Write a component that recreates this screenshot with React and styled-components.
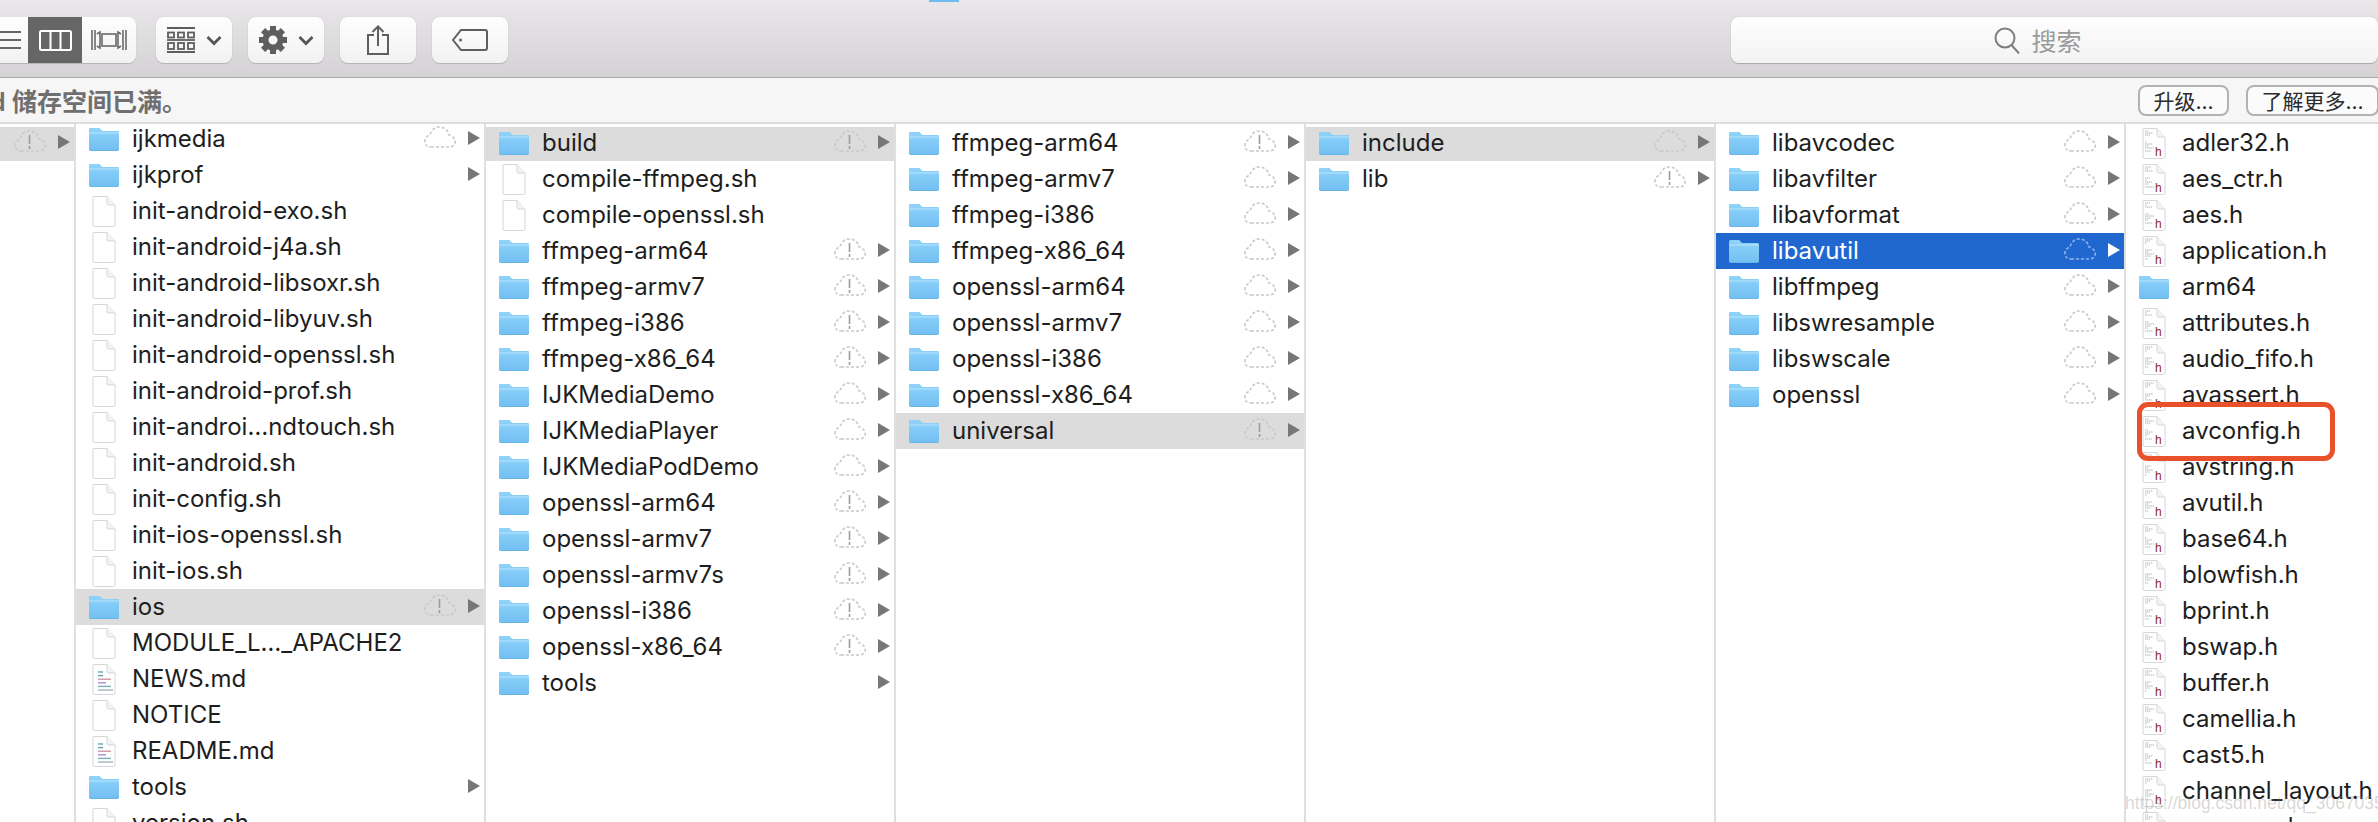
import React from 'react';
import styled, { createGlobalStyle } from 'styled-components';

const FONT = `Inter, "Noto Sans CJK SC", sans-serif`;

const Global = createGlobalStyle`
  html, body {
    margin: 0;
    background: #fff;
    overflow: hidden;
  }
`;

const Folder = () => (
  <svg width="30" height="24" viewBox="0 0 30 24">
    <defs>
      <linearGradient id="folderBody" x1="0" y1="0" x2="0" y2="1">
        <stop offset="0" stopColor="#8fd3fa" />
        <stop offset="1" stopColor="#72bff2" />
      </linearGradient>
    </defs>
    <path d="M0 3a2 2 0 0 1 2-2h8l3 3h15a2 2 0 0 1 2 2v16a2 2 0 0 1-2 2H2a2 2 0 0 1-2-2Z" fill="#5ea9dd" />
    <path d="M0 3a2 2 0 0 1 2-2h8l3 3h15a2 2 0 0 1 2 2v15.500a2 2 0 0 1-2 2H2a2 2 0 0 1-2-2Z" fill="url(#folderBody)" />
    <path d="M0 6h30" stroke="#b9e4fc" strokeWidth="1" />
  </svg>
);

const Paper = () => (
  <>
    <path d="M1 1.500a1 1 0 0 1 1-1h13l8 8.500v20a1.500 1.500 0 0 1-1.500 1.500h-19a1.500 1.500 0 0 1-1.500-1.500Z" fill="#fff" stroke="#d6d6d6" />
    <path d="M15 .5v7a1.500 1.500 0 0 0 1.500 1.500H23" fill="#f4f4f4" stroke="#d6d6d6" />
  </>
);

const MD_LINES = [
  ['#5d9fb8', 6, 11],
  ['#5d9fb8', 6, 11],
  ['#c79aa8', 6, 19],
  ['#a48fd0', 6, 14],
  ['#7fb0b8', 6, 19],
  ['#a3b4b8', 6, 21],
];

const Doc = ({ kind, seed = 0 }) => (
  <svg width="24" height="31" viewBox="0 0 24 31">
    <Paper />
    {kind === 'md' && MD_LINES.map(([c, x, e], i) => (
      <path key={i} d={`M${x} ${8 + i * 3.6}H${e}`} stroke={c} strokeWidth="1.400" />
    ))}
    {kind === 'h' && [3, 5, 7, 14, 16, 18, 20, 23].map((y, i) => (
      <path key={y} d={`M3 ${y}H${5 + ((seed + i * 5) % 8)}`} stroke="#b5b5b5" strokeWidth="1" strokeDasharray="1.500 .5" />
    ))}
    {kind === 'h' && <text x="13" y="28" fontSize="12" fontFamily="Liberation Sans" fill="#8c2b2b">h</text>}
  </svg>
);

const Cloud = ({ warn, light }) => (
  <svg width="32" height="22" viewBox="0 0 32 22" fill="none">
    <path
      d="M7 21H25C30 21 32 17 31 14C30 11 27 9 25 9C24 4 20 1 15 1C10 1 7 5 6 9C3 10 1 12 1 15C1 19 3 21 7 21Z"
      stroke={light ? '#8fb4ea' : '#c9c9c9'}
      strokeWidth="1.600"
      strokeDasharray="3 2"
    />
    {warn && <path d="M15.500 5V14M15.500 16V19" stroke="#9c9c9c" strokeWidth="1.600" />}
  </svg>
);

const Window = styled.div`
  position: relative;
  width: 2378px;
  height: 822px;
  overflow: hidden;
  display: flex;
  flex-direction: column;
  font-family: ${FONT};
  background: #fff;
`;

const Toolbar = styled.div`
  position: relative;
  flex: none;
  height: 78px;
  box-sizing: border-box;
  padding-top: 17px;
  display: flex;
  align-items: flex-start;
  gap: 16px;
  background: linear-gradient(#e9e7e9, #d4d2d4);
  border-bottom: 1px solid #a9a9a9;
  overflow: hidden;
`;

const TitleFolder = styled.div`
  position: absolute;
  top: 0;
  left: 929px;
  width: 30px;
  height: 2px;
  background: #6fbdf0;
`;

const Segments = styled.div`
  flex: none;
  display: flex;
  height: 46px;
  margin-left: -26px;
  margin-right: 4px;
  border-radius: 8px;
  overflow: hidden;
  background: linear-gradient(#fefefe, #f2f2f2);
  box-shadow: 0 1px 1px #b4b2b4;
`;

const Segment = styled.div`
  width: ${p => p.$w}px;
  display: flex;
  align-items: center;
  justify-content: center;
  background: ${p => (p.$active ? '#666666' : 'transparent')};
`;

const ToolButton = styled.div`
  flex: none;
  width: 76px;
  height: 46px;
  box-sizing: border-box;
  display: flex;
  align-items: center;
  justify-content: center;
  gap: 11px;
  border-radius: 8px;
  background: linear-gradient(#fefefe, #f2f2f2);
  box-shadow: 0 0 1px #b4b2b4, 0 1px 1px #b4b2b4;
`;

const Search = styled.div`
  flex: none;
  width: 647px;
  height: 46px;
  margin-left: 1207px;
  box-sizing: border-box;
  display: flex;
  align-items: center;
  justify-content: center;
  gap: 11px;
  padding-right: 33px;
  border-radius: 8px;
  background: linear-gradient(#fefefe, #f3f3f3);
  box-shadow: 0 0 1px #a8a8a8, 0 1px 1px #a8a8a8;
  color: #9b9b9b;
  font-size: 25px;
`;

const Notice = styled.div`
  flex: none;
  height: 46px;
  box-sizing: border-box;
  display: flex;
  align-items: center;
  justify-content: space-between;
  background: #f6f6f6;
  border-bottom: 2px solid #dcdcdc;
  overflow: hidden;
`;

const NoticeText = styled.div`
  margin-left: -72px;
  font-size: 25px;
  font-weight: 600;
  color: #6f6f6f;
  white-space: nowrap;
`;

const NoticeActions = styled.div`
  display: flex;
  gap: 17px;
  margin-right: -1px;
`;

const NoticeButton = styled.div`
  width: ${p => p.$w}px;
  height: 31px;
  box-sizing: border-box;
  display: flex;
  align-items: center;
  justify-content: center;
  border: 2px solid #b2b2b2;
  border-radius: 8px;
  font-size: 21px;
  color: #2b2b2b;
  background: #fbfbfb;
`;

const Browser = styled.div`
  flex: 1;
  min-height: 0;
  display: flex;
`;

const Column = styled.div`
  flex: none;
  width: ${p => p.$w}px;
  box-sizing: border-box;
  border-right: ${p => (p.$last ? 'none' : '2px solid #dfdfdf')};
  overflow: hidden;
`;

const List = styled.div`
  margin-top: ${p => p.$offset || 0}px;
  padding-top: 1px;
`;

const Row = styled.div`
  height: 36px;
  box-sizing: border-box;
  display: flex;
  align-items: center;
  padding-left: ${p => (p.$bare ? 0 : 13)}px;
  background: ${p => (p.$state === 'selected' ? '#2068d0' : p.$state === 'open' ? '#dcdcdc' : 'transparent')};
  color: ${p => (p.$state === 'selected' ? '#fff' : '#1e1e1e')};
  ${p => p.$clip && `
    height: 34px;
    margin-top: 2px;
    padding-bottom: 2px;
  `}
`;

const IconSlot = styled.div`
  flex: none;
  width: 30px;
  height: 31px;
  display: flex;
  align-items: center;
  justify-content: center;
`;

const Name = styled.div`
  flex: 1;
  min-width: 0;
  margin-left: ${p => (p.$bare ? 0 : 13)}px;
  font-size: 24px;
  line-height: 36px;
  white-space: nowrap;
`;

const CloudSlot = styled.div`
  flex: none;
  width: 32px;
  height: 22px;
  margin: -4px 12px 0 0;
`;

const Arrow = styled.div`
  flex: none;
  width: 0;
  height: 0;
  margin: -2px 4px 0 0;
  border-left: 12px solid ${p => (p.$light ? '#fff' : '#777')};
  border-top: 7px solid transparent;
  border-bottom: 7px solid transparent;
`;

const Mark = styled.div`
  position: absolute;
  left: 2137px;
  top: 402px;
  width: 198px;
  height: 59px;
  box-sizing: border-box;
  border: 5px solid #e8512a;
  border-radius: 11px;
`;

const Watermark = styled.div`
  position: absolute;
  left: 2125px;
  top: 793px;
  font-family: "Liberation Sans", sans-serif;
  font-size: 17.500px;
  color: rgba(140, 140, 140, .35);
  white-space: nowrap;
`;

// kinds: d = folder, f = plain file, m = markdown, h = header
const folder = (name, status, state) => ({ name, kind: 'd', status, state });
const file = (name, kind = 'f') => ({ name, kind });

const COLUMNS = [
  { w: 76, rows: [{ name: '', kind: null, status: 'warn', state: 'open', arrow: true }] },
  {
    w: 410,
    offset: -4,
    rows: [
      folder('ijkmedia', 'cloud'),
      folder('ijkprof'),
      file('init-android-exo.sh'),
      file('init-android-j4a.sh'),
      file('init-android-libsoxr.sh'),
      file('init-android-libyuv.sh'),
      file('init-android-openssl.sh'),
      file('init-android-prof.sh'),
      file('init-androi…ndtouch.sh'),
      file('init-android.sh'),
      file('init-config.sh'),
      file('init-ios-openssl.sh'),
      file('init-ios.sh'),
      folder('ios', 'warn', 'open'),
      file('MODULE_L…_APACHE2'),
      file('NEWS.md', 'm'),
      file('NOTICE'),
      file('README.md', 'm'),
      folder('tools'),
      file('version.sh'),
    ],
  },
  {
    w: 410,
    rows: [
      folder('build', 'warn', 'open'),
      file('compile-ffmpeg.sh'),
      file('compile-openssl.sh'),
      folder('ffmpeg-arm64', 'warn'),
      folder('ffmpeg-armv7', 'warn'),
      folder('ffmpeg-i386', 'warn'),
      folder('ffmpeg-x86_64', 'warn'),
      folder('IJKMediaDemo', 'cloud'),
      folder('IJKMediaPlayer', 'cloud'),
      folder('IJKMediaPodDemo', 'cloud'),
      folder('openssl-arm64', 'warn'),
      folder('openssl-armv7', 'warn'),
      folder('openssl-armv7s', 'warn'),
      folder('openssl-i386', 'warn'),
      folder('openssl-x86_64', 'warn'),
      folder('tools'),
    ],
  },
  {
    w: 410,
    rows: [
      folder('ffmpeg-arm64', 'warn'),
      folder('ffmpeg-armv7', 'cloud'),
      folder('ffmpeg-i386', 'cloud'),
      folder('ffmpeg-x86_64', 'cloud'),
      folder('openssl-arm64', 'cloud'),
      folder('openssl-armv7', 'cloud'),
      folder('openssl-i386', 'cloud'),
      folder('openssl-x86_64', 'cloud'),
      folder('universal', 'warn', 'open'),
    ],
  },
  {
    w: 410,
    rows: [folder('include', 'cloud', 'open'), folder('lib', 'warn')],
  },
  {
    w: 410,
    rows: [
      folder('libavcodec', 'cloud'),
      folder('libavfilter', 'cloud'),
      folder('libavformat', 'cloud'),
      folder('libavutil', 'cloud', 'selected'),
      folder('libffmpeg', 'cloud'),
      folder('libswresample', 'cloud'),
      folder('libswscale', 'cloud'),
      folder('openssl', 'cloud'),
    ],
  },
  {
    w: 252,
    last: true,
    rows: [
      'adler32.h', 'aes_ctr.h', 'aes.h', 'application.h', 'arm64', 'attributes.h', 'audio_fifo.h',
      'avassert.h', 'avconfig.h', 'avstring.h', 'avutil.h', 'base64.h', 'blowfish.h', 'bprint.h',
      'bswap.h', 'buffer.h', 'camellia.h', 'cast5.h', 'channel_layout.h', 'common.h',
    ].map(n => (n === 'arm64' ? { name: n, kind: 'd', noArrow: true } : file(n, 'h'))),
  },
];

const rowIcon = (row, i) => {
  if (row.kind === 'd') return <Folder />;
  if (row.kind === 'm') return <Doc kind="md" />;
  if (row.kind === 'h') return <Doc kind="h" seed={i * 3 + row.name.length} />;
  return <Doc />;
};

const ItemRow = ({ row, index, clip }) => {
  const showArrow = row.arrow || (row.kind === 'd' && !row.noArrow);
  const bare = !row.kind;
  return (
    <Row $state={row.state} $clip={clip} $bare={bare}>
      {!bare && <IconSlot>{rowIcon(row, index)}</IconSlot>}
      <Name $bare={bare}>{row.name}</Name>
      {row.status && (
        <CloudSlot>
          <Cloud warn={row.status === 'warn'} light={row.state === 'selected'} />
        </CloudSlot>
      )}
      {showArrow && <Arrow $light={row.state === 'selected'} />}
    </Row>
  );
};

const Chevron = () => (
  <svg width="16" height="11" viewBox="0 0 16 11" fill="none">
    <path d="M1.500 2L8 8.500 14.500 2" stroke="#555" strokeWidth="2.800" />
  </svg>
);

const Gear = () => (
  <svg width="28" height="28" viewBox="0 0 28 28" fill="none">
    {[0, 45, 90, 135, 180, 225, 270, 315].map(a => (
      <rect key={a} x="11" y="0" width="6" height="7" fill="#5e5e5e" transform={`rotate(${a} 14 14)`} />
    ))}
    <circle cx="14" cy="14" r="7.500" stroke="#5e5e5e" strokeWidth="6" />
  </svg>
);

const App = () => (
  <Window>
    <Global />
    <Toolbar>
      <TitleFolder />
      <Segments>
        <Segment $w={54}>
          <svg width="40" height="20" viewBox="0 0 40 20">
            <path d="M0 2H40M0 10H40M0 18H40" stroke="#666" strokeWidth="2" />
          </svg>
        </Segment>
        <Segment $w={54} $active>
          <svg width="33" height="21" viewBox="0 0 33 21" fill="none">
            <rect x="1" y="1" width="31" height="19" rx="1.500" stroke="#fff" strokeWidth="2" />
            <path d="M11.500 1V20M21.500 1V20" stroke="#fff" strokeWidth="2" />
          </svg>
        </Segment>
        <Segment $w={54}>
          <svg width="36" height="20" viewBox="0 0 36 20" fill="none" stroke="#6a6a6a" strokeWidth="1.600">
            <path d="M1 0V20M4 0V20M6 4L9 2V18L6 16M35 0V20M32 0V20M30 4L27 2V18L30 16" />
            <rect x="11" y="4" width="14" height="12" />
          </svg>
        </Segment>
      </Segments>
      <ToolButton>
        <svg width="28" height="26" viewBox="0 0 28 26" fill="none" stroke="#5e5e5e">
          <path d="M0 1H28M0 25H28" strokeWidth="2" />
          <rect x="1" y="5.500" width="6" height="5" strokeWidth="1.800" />
          <rect x="11" y="5.500" width="6" height="5" strokeWidth="1.800" />
          <rect x="21" y="5.500" width="6" height="5" strokeWidth="1.800" />
          <path d="M0 13H28" strokeWidth="1.800" />
          <rect x="1" y="16" width="6" height="6" strokeWidth="1.800" />
          <rect x="11" y="16" width="6" height="6" strokeWidth="1.800" />
          <rect x="21" y="16" width="6" height="6" strokeWidth="1.800" />
        </svg>
        <Chevron />
      </ToolButton>
      <ToolButton>
        <Gear />
        <Chevron />
      </ToolButton>
      <ToolButton>
        <svg width="24" height="30" viewBox="0 0 24 30" fill="none" stroke="#5e5e5e" strokeWidth="2">
          <path d="M8 10H2V29H22V10H16M12 21V1.500M6.500 7L12 1.500 17.500 7" />
        </svg>
      </ToolButton>
      <ToolButton>
        <svg width="36" height="22" viewBox="0 0 36 22" fill="none" stroke="#5e5e5e" strokeWidth="2">
          <path d="M9 1H33a2 2 0 0 1 2 2V19a2 2 0 0 1-2 2H9L1 11Z" />
          <circle cx="8.500" cy="11" r="1.500" fill="#5e5e5e" stroke="none" />
        </svg>
      </ToolButton>
      <Search>
        <svg width="26" height="27" viewBox="0 0 26 27" fill="none" stroke="#7d7d7d" strokeWidth="2">
          <circle cx="11" cy="11" r="9.500" />
          <path d="M17.500 18L25 26.500" />
        </svg>
        搜索
      </Search>
    </Toolbar>
    <Notice>
      <NoticeText>iCloud 储存空间已满。</NoticeText>
      <NoticeActions>
        <NoticeButton $w={91}>升级...</NoticeButton>
        <NoticeButton $w={133}>了解更多...</NoticeButton>
      </NoticeActions>
    </Notice>
    <Browser>
      {COLUMNS.map((col, c) => (
        <Column key={c} $w={col.w} $last={col.last}>
          <List $offset={col.offset}>
            {col.rows.map((row, i) => (
              <ItemRow key={row.name + i} row={row} index={i} clip={i === 0 && !col.offset} />
            ))}
          </List>
        </Column>
      ))}
    </Browser>
    <Mark />
    <Watermark>https://blog.csdn.net/qq_30670353</Watermark>
  </Window>
);

export default App;
